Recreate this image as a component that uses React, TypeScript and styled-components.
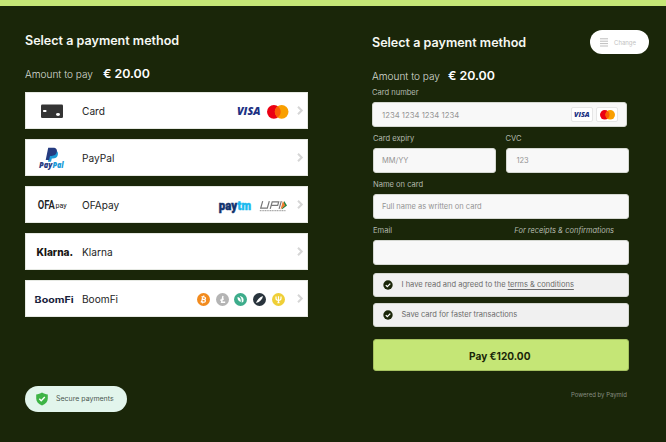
import React from "react";
import styled, { createGlobalStyle } from "styled-components";

const GlobalStyle = createGlobalStyle`
  * { box-sizing: border-box; }
  body { margin: 0; background: #1a2609; font-family: Inter, "Liberation Sans", sans-serif; }
  svg { display: block; flex: none; overflow: visible; }
`;

const Page = styled.div`
  height: 442px;
  overflow: hidden;
  border-top: 6px solid #c5e676;
  background: #1a2609;
  display: grid;
  grid-template-columns: 283px 277px;
  column-gap: 64px;
  padding-left: 25px;
`;
const MethodPanel = styled.section`
  display: flex;
  flex-direction: column;
  align-items: flex-start;
  padding-top: 27px;
`;
const CardPanel = styled.section`
  display: flex;
  flex-direction: column;
  padding-top: 24px;
`;
const Heading = styled.h1`
  margin: 0;
  font-size: 12.55px;
  font-weight: 600;
  line-height: 16px;
  color: #f6f8f3;
  white-space: nowrap;
`;
const Amount = styled.div<{ $top: number; $gap: number }>`
  margin-top: ${(p) => p.$top}px;
  height: 20px;
  display: flex;
  align-items: center;
  gap: ${(p) => p.$gap}px;
  font-size: 10.05px;
  font-weight: 300;
  color: #d8dcd4;
  white-space: nowrap;
  strong { font-size: 12.4px; font-weight: 600; line-height: 16px; padding-bottom: 1px; color: #fff; }
`;
const MethodList = styled.div`
  width: 100%;
  margin-top: 8px;
  display: flex;
  flex-direction: column;
  gap: 10px;
`;
const Method = styled.button`
  width: 100%;
  height: 37px;
  padding: 0 4px 0 7px;
  border: 1px solid #e6e9e3;
  background: #fff;
  display: flex;
  align-items: center;
  font-family: inherit;
  text-align: left;
`;
const LogoSlot = styled.span`
  width: 49px;
  display: flex;
`;
const MethodName = styled.span`
  flex: 1;
  font-size: 10.15px;
  line-height: 14px;
  color: #252525;
`;
const Brands = styled.span<{ $gap: number; $end: number }>`
  display: flex;
  align-items: center;
  gap: ${(p) => p.$gap}px;
  margin-right: ${(p) => p.$end}px;
  padding-top: 2px;
`;
const SecureBadge = styled.div`
  width: 102px;
  height: 26px;
  margin-top: 69px;
  padding-left: 10px;
  border-radius: 13px;
  background: #e2f5ec;
  display: flex;
  align-items: center;
  gap: 7px;
  font-size: 7px;
  color: #4b5750;
  white-space: nowrap;
  span { margin-top: -1px; }
`;
const CardHeader = styled.header`
  display: flex;
  height: 24px;
  justify-content: space-between;
  h1 { margin-top: 5px; }
`;
const ChangeButton = styled.button`
  width: 59px;
  height: 24px;
  border: 0;
  border-radius: 12px;
  background: #fff;
  display: flex;
  align-items: center;
  padding: 0 0 0 10px;
  gap: 6px;
  font-family: inherit;
  font-size: 6px;
  color: #c2c2c2;
`;
const Form = styled.form`
  width: 257px;
  display: flex;
  flex-direction: column;
`;
const Label = styled.label<{ $indent?: number }>`
  display: block;
  height: 12px;
  padding-left: ${(p) => p.$indent ?? 1}px;
  font-size: 7.55px;
  line-height: 12px;
  color: #b3b9ad;
  white-space: nowrap;
`;
const NumberLabel = styled(Label)`
  line-height: 14px;
`;
const LabelRow = styled.div`
  display: flex;
  justify-content: space-between;
  padding-right: 15px;
  margin-top: 6px;
  em { font-size: 7.45px; line-height: 12px; color: #b3b9ad; }
`;
const Field = styled.div<{ $pad?: number }>`
  height: 25px;
  margin: 3px 0.5px 0 1px;
  padding: 0 8px 0 ${(p) => p.$pad ?? 8}px;
  border: 1px solid #d5d8d2;
  border-radius: 3px;
  background: #f8f8f8;
  display: flex;
  align-items: center;
  font-size: 7.5px;
  color: #949494;
  white-space: nowrap;
`;
const NumberField = styled(Field)`
  margin: 4px 2px 0 0;
  padding-left: 9px;
  justify-content: space-between;
  font-size: 7.75px;
`;
const SplitRow = styled.div`
  display: grid;
  grid-template-columns: 124.5px 124.5px;
  column-gap: 8px;
  margin-top: 6px;
`;
const Group = styled.div`
  margin-top: 6px;
`;
const CardChips = styled.span`
  display: flex;
  gap: 3px;
`;
const Chip = styled.span`
  width: 22px;
  height: 15px;
  border: 1px solid #e6e6e6;
  border-radius: 2px;
  background: #fff;
  display: grid;
  place-items: center;
`;
const Consent = styled.div<{ $top: number }>`
  height: 24px;
  margin: ${(p) => p.$top}px 0.5px 0 1px;
  padding-left: 8.5px;
  border: 1px solid #d5d8d2;
  border-radius: 3px;
  background: #f0f0f0;
  display: flex;
  align-items: center;
  gap: 9px;
  font-size: 7.53px;
  line-height: 10px;
  color: #6b6b6b;
  white-space: nowrap;
  span { margin-top: -1px; }
  u { text-underline-offset: 1.5px; text-decoration-thickness: 0.7px; }
`;
const PayButton = styled.button`
  height: 32px;
  margin: 12px 0.5px 0 1px;
  padding: 2px 2px 0 0;
  border: 1px solid #a5c160;
  border-radius: 3px;
  background: #c5e676;
  color: #1a2609;
  font-family: inherit;
  font-size: 10.1px;
  font-weight: 700;
`;
const Powered = styled.footer`
  margin: 19px 2px 0 0;
  text-align: right;
  font-size: 6px;
  line-height: 10px;
  color: #878d80;
`;

const Chevron = () => (
  <svg width="6" height="9" viewBox="0 0 6 9" fill="none" stroke="#d6d6d6" strokeWidth="2">
    <path d="M1 .8 4.7 4.5 1 8.2" />
  </svg>
);
const CardIcon = () => (
  <svg width="40" height="24" viewBox="0 0 40 24">
    <rect x="8" y="5.5" width="22" height="13.5" rx="1.3" fill="#343434" />
    <rect x="10" y="11" width="3.5" height="2" rx=".8" fill="#fff" />
    <ellipse cx="25" cy="15.5" rx="2" ry="1.4" fill="#fff" />
  </svg>
);
const PayPalLogo = () => (
  <svg width="40" height="24" viewBox="0 0 40 24">
    <path d="M16.7 4.6h4.4c3.5 0 4.3 2 3.7 4.4-.7 2.6-2.5 3.5-5 3.5h-1l-.8 3.3h-3z" fill="#1d9bd7" />
    <path d="M15.2 1.8h4.7c3.5 0 4.5 1.9 3.9 4.3-.6 2.7-2.5 3.8-5.2 3.8H17l-.9 4h-3.4z" fill="#253b80" />
    <g fontFamily="Open Sans, sans-serif" fontSize="7.8" fontWeight="800" fontStyle="italic">
      <text x="6" y="22" textLength="13.3" lengthAdjust="spacingAndGlyphs" fill="#253b80">Pay</text>
      <text x="19.4" y="22" textLength="11.3" lengthAdjust="spacingAndGlyphs" fill="#179bd7">Pal</text>
    </g>
  </svg>
);
const OfaLogo = () => (
  <svg width="40" height="24" viewBox="0 0 40 24" fontFamily="Roboto, sans-serif" fill="#222">
    <text x="4.7" y="16" fontSize="12" fontWeight="600" textLength="17" lengthAdjust="spacingAndGlyphs">OFA</text>
    <text x="22.4" y="15" fontSize="7.8" fontWeight="400" textLength="11.3" lengthAdjust="spacingAndGlyphs">pay</text>
    <path d="M14.2 11.7h1.4" stroke="#245bd9" strokeWidth=".8" />
  </svg>
);
const KlarnaLogo = () => (
  <svg width="40" height="24" viewBox="0 0 40 24">
    <text x="3.6" y="16.3" fontFamily="Inter, sans-serif" fontSize="10.6" fontWeight="800" textLength="36.5" lengthAdjust="spacingAndGlyphs" fill="#171412">Klarna.</text>
  </svg>
);
const BoomFiLogo = () => (
  <svg width="41" height="24" viewBox="0 0 41 24">
    <text x="1.6" y="15.5" fontFamily="Inter, sans-serif" fontSize="9" fontWeight="700" textLength="39" lengthAdjust="spacingAndGlyphs" fill="#18213b">BoomFi</text>
    <path d="M1.5 12.1h4" stroke="#fff" strokeWidth=".8" />
  </svg>
);
const Visa = ({ width }: { width: number }) => (
  <svg width={width} height={(width * 9) / 24} viewBox="0 0 24 9">
    <text x="0" y="8.2" fontFamily="Open Sans, sans-serif" fontSize="10.6" fontWeight="800" fontStyle="italic" textLength="23.5" lengthAdjust="spacingAndGlyphs" fill="#203183">VISA</text>
  </svg>
);
const Mastercard = ({ width }: { width: number }) => (
  <svg width={width} height={(width * 14) / 22} viewBox="0 0 22 14">
    <circle cx="7" cy="7" r="7" fill="#eb0013" />
    <circle cx="15" cy="7" r="7" fill="#f99f00" />
    <path d="M11 1.26a7 7 0 0 1 0 11.48 7 7 0 0 1 0-11.48z" fill="#fa5d05" />
  </svg>
);
const Paytm = () => (
  <svg width="34" height="14" viewBox="0 0 34 14" fontFamily="Roboto, sans-serif" fontSize="12.5" fontWeight="900">
    <text x="0.8" y="10.5" textLength="18.3" lengthAdjust="spacingAndGlyphs" fill="#13336f" stroke="#13336f" strokeWidth=".5">pay</text>
    <text x="19.6" y="10.5" textLength="13.4" lengthAdjust="spacingAndGlyphs" fill="#18b9ef" stroke="#18b9ef" strokeWidth=".5">tm</text>
  </svg>
);
const Upi = () => (
  <svg width="29" height="12" viewBox="0 0 29 12" fill="none" stroke="#777" strokeWidth="1.2">
    <path d="m3.7 1.2-2 7h6.6l2-7M11.2 8.8l2-7h6.5l-1 3.6h-6.5M22.3 1.2l-2.2 7.6" />
    <path d="m25.2 1 2.8 4.4L22.8 9.4z" fill="#188545" stroke="none" />
    <path d="m23.9 1 2.4 4.4L21.5 9.4z" fill="#ed7c31" stroke="none" />
    <path d="M.8 10.7h26" strokeWidth=".8" strokeDasharray="1.2 .5" />
  </svg>
);

const coinColors = { btc: "#f28b1e", ltc: "#b4b4b4", neo: "#3dac8b", feather: "#29343d", psi: "#efcf37" };
type Coin = keyof typeof coinColors;
const glyphs: Record<Coin, React.ReactNode> = {
  btc: (
    <g fill="none" stroke="#fff" strokeWidth="1.2">
      <path d="m5.7 3.5-1.1 6M4.5 3.6l2.7.4c2 .4 1.5 2.5-.2 2.4l-1.7-.2 1.7.3c2.3.5 1.5 3-.5 2.7l-2.8-.4M6.8 2.5l-.2 1.2M5.7 9l-.2 1.4" />
    </g>
  ),
  ltc: <path d="M7 3 5.6 9.2h3.6M4.3 7.4l3.5-1.6" fill="none" stroke="#fff" strokeWidth="1.4" />,
  neo: (
    <g fill="#fff">
      <path d="M3.5 3.9c2.4.4 3.6 1.8 3.3 5.1-2.3-.8-3.4-2.2-3.3-5.1z" />
      <path d="M5.7 3c3 .4 4.7 2.7 3.6 5.7L7.7 9.8C8 6.3 7.3 4.4 5.7 3z" />
    </g>
  ),
  feather: <path d="M3 10.1C4 6.7 6.6 4 10 2.9 9.5 6 7.2 8.7 3 10.1z" fill="#fff" />,
  psi: <path d="M4 3.5v1.8c0 2.9 5 2.9 5 0V3.5M6.5 3.3v6.6M5.5 9.6h2" fill="none" stroke="#fff" strokeWidth="1.2" />,
};
const CoinIcon = ({ coin }: { coin: Coin }) => (
  <svg width="13" height="13" viewBox="0 0 13 13">
    <circle cx="6.5" cy="6.5" r="6.5" fill={coinColors[coin]} />
    {glyphs[coin]}
  </svg>
);
const CheckIcon = () => (
  <svg width="10" height="10" viewBox="0 0 10 10">
    <circle cx="5" cy="5" r="4.7" fill="#1a2609" />
    <path d="m2.8 5.1 1.5 1.5 3-3" fill="none" stroke="#fff" strokeWidth="1.3" />
  </svg>
);
const Shield = () => (
  <svg width="14" height="14" viewBox="0 0 14 14">
    <path d="M7 .5C8.8 1.7 10.7 2.2 12.8 2.4v4.1c0 3.4-2.3 5.6-5.8 7-3.5-1.4-5.8-3.6-5.8-7V2.4C3.3 2.2 5.2 1.7 7 .5z" fill="#3eb446" />
    <path d="m4.3 6.8 1.9 1.9 3.6-3.6" fill="none" stroke="#fff" strokeWidth="1.4" />
  </svg>
);
const Lines = () => (
  <svg width="8" height="9" viewBox="0 0 8 9" stroke="#bdbdbd" strokeWidth="1">
    <path d="M0 .8h8M0 3.2h8M0 5.6h8M0 8h8" />
  </svg>
);

const methods = [
  { name: "Card", logo: <CardIcon />, gap: 6, end: 9, brands: <><Visa width={24} /><Mastercard width={21.5} /></> },
  { name: "PayPal", logo: <PayPalLogo /> },
  { name: "OFApay", logo: <OfaLogo />, gap: 7, end: 9.5, brands: <><Paytm /><Upi /></> },
  { name: "Klarna", logo: <KlarnaLogo /> },
  {
    name: "BoomFi",
    logo: <BoomFiLogo />,
    gap: 5.6,
    end: 12.5,
    brands: (Object.keys(coinColors) as Coin[]).map((c) => <CoinIcon key={c} coin={c} />),
  },
];

export default function App() {
  return (
    <>
      <GlobalStyle />
      <Page>
        <MethodPanel>
          <Heading>Select a payment method</Heading>
          <Amount $top={15} $gap={10}>Amount to pay <strong>€ 20.00</strong></Amount>
          <MethodList>
            {methods.map((m) => (
              <Method key={m.name}>
                <LogoSlot>{m.logo}</LogoSlot>
                <MethodName>{m.name}</MethodName>
                {m.brands && <Brands $gap={m.gap ?? 0} $end={m.end ?? 0}>{m.brands}</Brands>}
                <Chevron />
              </Method>
            ))}
          </MethodList>
          <SecureBadge><Shield /><span>Secure payments</span></SecureBadge>
        </MethodPanel>
        <CardPanel>
          <CardHeader>
            <Heading>Select a payment method</Heading>
            <ChangeButton><Lines />Change</ChangeButton>
          </CardHeader>
          <Amount $top={12} $gap={8}>Amount to pay <strong>€ 20.00</strong></Amount>
          <Form>
            <NumberLabel $indent={0}>Card number</NumberLabel>
            <NumberField>
              1234 1234 1234 1234
              <CardChips>
                <Chip><Visa width={16} /></Chip>
                <Chip><Mastercard width={15} /></Chip>
              </CardChips>
            </NumberField>
            <SplitRow>
              <div><Label>Card expiry</Label><Field>MM/YY</Field></div>
              <div><Label>CVC</Label><Field $pad={10}>123</Field></div>
            </SplitRow>
            <Group><Label>Name on card</Label><Field>Full name as written on card</Field></Group>
            <LabelRow><Label>Email</Label><em>For receipts &amp; confirmations</em></LabelRow>
            <Field />
            <Consent $top={8}><CheckIcon /><span>I have read and agreed to the <u>terms &amp; conditions</u></span></Consent>
            <Consent $top={6}><CheckIcon /><span>Save card for faster transactions</span></Consent>
            <PayButton type="button">Pay €120.00</PayButton>
            <Powered>Powered by Paymid</Powered>
          </Form>
        </CardPanel>
      </Page>
    </>
  );
}
